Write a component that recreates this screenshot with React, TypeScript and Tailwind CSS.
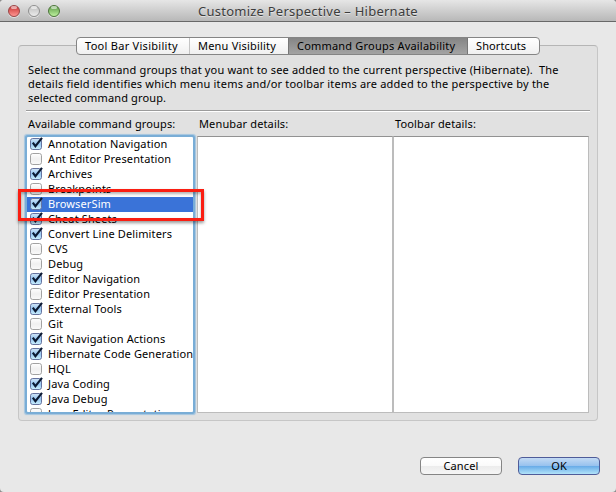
import React from "react";

const groups: [string, boolean][] = [
  ["Annotation Navigation", true],
  ["Ant Editor Presentation", false],
  ["Archives", true],
  ["Breakpoints", false],
  ["BrowserSim", true],
  ["Cheat Sheets", true],
  ["Convert Line Delimiters", true],
  ["CVS", false],
  ["Debug", false],
  ["Editor Navigation", true],
  ["Editor Presentation", false],
  ["External Tools", true],
  ["Git", false],
  ["Git Navigation Actions", true],
  ["Hibernate Code Generation", true],
  ["HQL", false],
  ["Java Coding", true],
  ["Java Debug", true],
  ["Java Editor Presentation", false],
];

function Check({ on }: { on: boolean }) {
  return (
    <svg className="block h-[15px] w-[14px] shrink-0" viewBox="0 0 14 15">
      <defs>
        <linearGradient id="on" x1="0" y1="0" x2="0" y2="1">
          <stop offset="0" stopColor="#d3e6f8" />
          <stop offset="0.5" stopColor="#94c5f0" />
          <stop offset="1" stopColor="#cdf0fd" />
        </linearGradient>
        <linearGradient id="off" x1="0" y1="0" x2="0" y2="1">
          <stop offset="0" stopColor="#ffffff" />
          <stop offset="0.5" stopColor="#f0f0f0" />
          <stop offset="1" stopColor="#fafafa" />
        </linearGradient>
      </defs>
      <rect x="0.5" y="1.5" width="11" height="11" rx="2.2" fill={on ? "url(#on)" : "url(#off)"} stroke={on ? "#65739f" : "#a2a2a2"} />
      {on && <path d="M2.8 5.6 L5.4 9.2 L12 0.8" fill="none" stroke="#0c1a33" strokeWidth="2.1" />}
    </svg>
  );
}

function Light({ className }: { className: string }) {
  return (
    <span className={"relative block h-[12px] w-[12px] rounded-full border shadow-[0_1px_0_rgba(255,255,255,0.5)] " + className}>
      <span className="absolute left-[2px] top-0 h-[3px] w-[6px] rounded-full bg-white/55" />
    </span>
  );
}

export default function App() {
  return (
    <div className="bg-[#8c8c8c]">
      <div className="relative flex h-[492px] w-[616px] flex-col overflow-hidden rounded-[4px] bg-[#e8e8e8] font-['Noto_Sans','Open_Sans',sans-serif] text-[11px] leading-[14px] text-black">
        <header className="flex h-[22px] shrink-0 items-center border-b border-[#686868] bg-linear-to-b from-[#e6e6e6] to-[#b8b8b8] pl-[8px]">
          <div className="flex gap-[8px]">
            <Light className="border-[#9a4545] bg-linear-to-b from-[#c4282e] to-[#ff9693]" />
            <Light className="border-[#8f8f8f] bg-linear-to-b from-[#bdbdbd] to-[#ececec]" />
            <Light className="border-[#4b7439] bg-linear-to-b from-[#5c9946] to-[#bdf29e]" />
          </div>
          <h1 className="ml-[138px] whitespace-pre text-[13px] tracking-[0.24px] text-[#3c3c3c] [text-shadow:0_1px_0_rgba(255,255,255,0.5)]">Customize Perspective – Hibernate</h1>
        </header>

        <main className="mx-[18px] mt-[23px] h-[376px] shrink-0 rounded-[4px] border border-[#c6c6c6] border-t-[#b5b5b5] bg-[#e1e1e1] px-[7px]">
          <nav className="-mt-[9px] ml-[50px] flex h-[18px] w-[464px] overflow-hidden rounded-[4px] border border-[#858585] bg-linear-to-b from-white to-[#f0f0f0] leading-[16px] tracking-[0.2px]">
            <div className="w-[113px] border-r border-[#c4c4c4] pl-[8px] tracking-[0.28px]">Tool Bar Visibility</div>
            <div className="w-[98px] pl-[8px]">Menu Visibility</div>
            <div className="w-[180px] border-x border-[#777777] bg-linear-to-b from-[#858585] to-[#a3a3a3] pl-[8px]">Command Groups Availability</div>
            <div className="pl-[8px] tracking-[0.1px]">Shortcuts</div>
          </nav>
          <div className="mt-[8px] whitespace-pre pl-[2px] tracking-[0.18px]">
            <div className="tracking-[0.17px]">Select the command groups that you want to see added to the current perspective (Hibernate).  The</div>
            <div className="tracking-[0.19px]">details field identifies which menu items and/or toolbar items are added to the perspective by the</div>
            <div className="tracking-[0.14px]">selected command group.</div>
          </div>
          <hr className="mt-[5px] h-[2px] w-[564px] border-t border-b border-t-[#9b9b9b] border-b-white" />
          <div className="mt-[5px] flex whitespace-pre pl-[2px] tracking-[0.14px]">
            <div className="w-[171px]">Available command groups:</div>
            <div className="w-[196px]">Menubar details:</div>
            <div>Toolbar details:</div>
          </div>
          <div className="mt-[5px] flex h-[277px]">
            <div className="mr-[4px] mt-px ml-px h-[275px] w-[166px] shrink-0 rounded-[1px] bg-white shadow-[0_0_0_2px_#79add6,0_0_1px_3px_#a4c5df]">
              <ul className="h-full overflow-hidden whitespace-pre tracking-[0.13px]">
                {groups.map(([name, on]) => (
                  <li key={name} className={"flex h-[15px] pl-[3px] leading-[13px] " + (name === "BrowserSim" ? "bg-[#3a73d8] text-white" : "")}>
                    <Check on={on} />
                    <span className="ml-[4px]">{name}</span>
                  </li>
                ))}
              </ul>
            </div>
            <div className="w-[196px] border border-[#bcbcbc] border-t-[#929292] bg-white" />
            <div className="w-[196px] border border-[#bcbcbc] border-t-[#929292] bg-white" />
          </div>
        </main>

        <footer className="mt-[36px] flex justify-end gap-[16px] pr-[16px] text-center leading-[16px]">
          <button className="h-[18px] w-[82px] rounded-[4px] border border-[#858585] bg-[linear-gradient(#ffffff,#fafafa_50%,#ececec_52%,#f6f6f6)] tracking-[0.15px]">Cancel</button>
          <button className="h-[18px] w-[82px] rounded-[4px] border border-[#4f5c99] bg-[linear-gradient(#c3daf4,#96c1ee_50%,#69ace8_52%,#b2e3f9)]">OK</button>
        </footer>

        <div className="absolute left-[18px] top-[189px] h-[32px] w-[186px] border-[3px] border-[#fa1e12] shadow-[0_2px_3px_rgba(0,0,0,0.4),inset_0_2px_3px_rgba(0,0,0,0.3)]" />
      </div>
    </div>
  );
}
